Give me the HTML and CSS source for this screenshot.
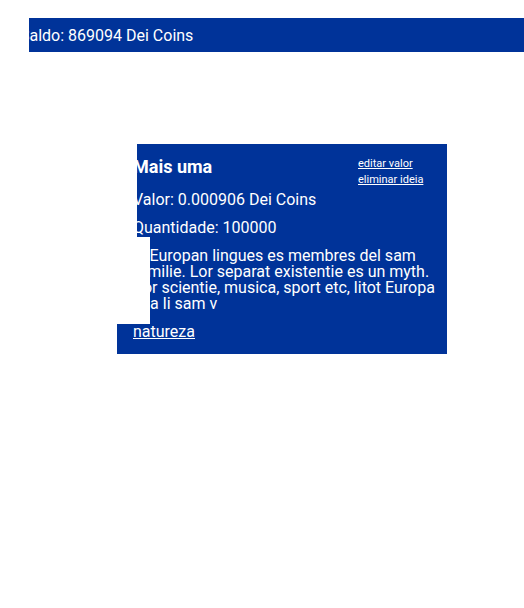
FILE: index.html
```html
<!DOCTYPE html>
<html lang="pt">
<head>
    <meta charset="UTF-8">
    <meta name="viewport" content="width=device-width, initial-scale=1.0">
    <title>Ideias</title>
    <link rel="stylesheet" href="styles.css">
</head>
<body>
    <div class="saldo">
        <span class="saldo-text">Saldo: 869094 Dei Coins</span>
    </div>

    <div class="ideia">
        <div class="ideia-head">
            <h3 class="ideia-title">Mais uma</h3>
            <div class="ideia-actions">
                <a href="#">editar valor</a>
                <a href="#">eliminar ideia</a>
            </div>
        </div>
        <p class="ideia-line">Valor: 0.000906 Dei Coins</p>
        <p class="ideia-line ideia-qty">Quantidade: 100000</p>
        <p class="ideia-desc">Li Europan lingues es membres del sam familie. Lor separat existentie es un myth. Por scientie, musica, sport etc, litot Europa usa li sam v</p>
        <a href="#" class="ideia-tag">natureza</a>

        <!-- white blocks sitting over the card's left edge -->
        <div class="mask mask-top"></div>
        <div class="mask mask-desc"></div>
    </div>
</body>
</html>
```

FILE: styles.css
```css
body {
    font-family: Roboto, "Liberation Sans", sans-serif;
    background-color: #ffffff;
    margin: 0;
    padding: 0;
    color: #ffffff;
}

.saldo {
    margin: 18px 0 0 29px;
    height: 34px;
    background-color: #003399;
    overflow: hidden;
    display: flex;
    align-items: center;
    font-size: 16px;
    white-space: nowrap;
}

.saldo-text {
    margin-left: -9px;
}

.ideia {
    position: relative;
    width: 330px;
    margin: 92px 0 0 117px;
    padding: 12px 9px 11px 16px;
    box-sizing: border-box;
    background-color: #003399;
}

.ideia-head {
    display: flex;
    justify-content: space-between;
    align-items: flex-start;
    margin-bottom: 1px;
}

.ideia-title {
    margin: 0;
    font-size: 18px;
    line-height: 22px;
    font-weight: bold;
}

.ideia-actions {
    display: flex;
    flex-direction: column;
    width: 68px;
    margin-right: 12px;
    font-size: 11px;
    line-height: 16px;
}

.ideia-actions a {
    color: #ffffff;
}

.ideia-line {
    margin: 0;
    font-size: 16px;
    line-height: 22px;
}

.ideia-qty {
    margin-top: 6px;
}

.ideia-desc {
    margin: 9px 0 0 0;
    font-size: 16px;
    line-height: 16px;
}

.ideia-tag {
    display: block;
    margin-top: 9px;
    font-size: 16px;
    line-height: 22px;
    color: #ffffff;
}

.mask {
    position: absolute;
    left: 0;
    background-color: #ffffff;
}

.mask-top {
    top: 0;
    width: 20px;
    height: 93px;
}

.mask-desc {
    top: 93px;
    width: 33px;
    height: 87px;
}
```
